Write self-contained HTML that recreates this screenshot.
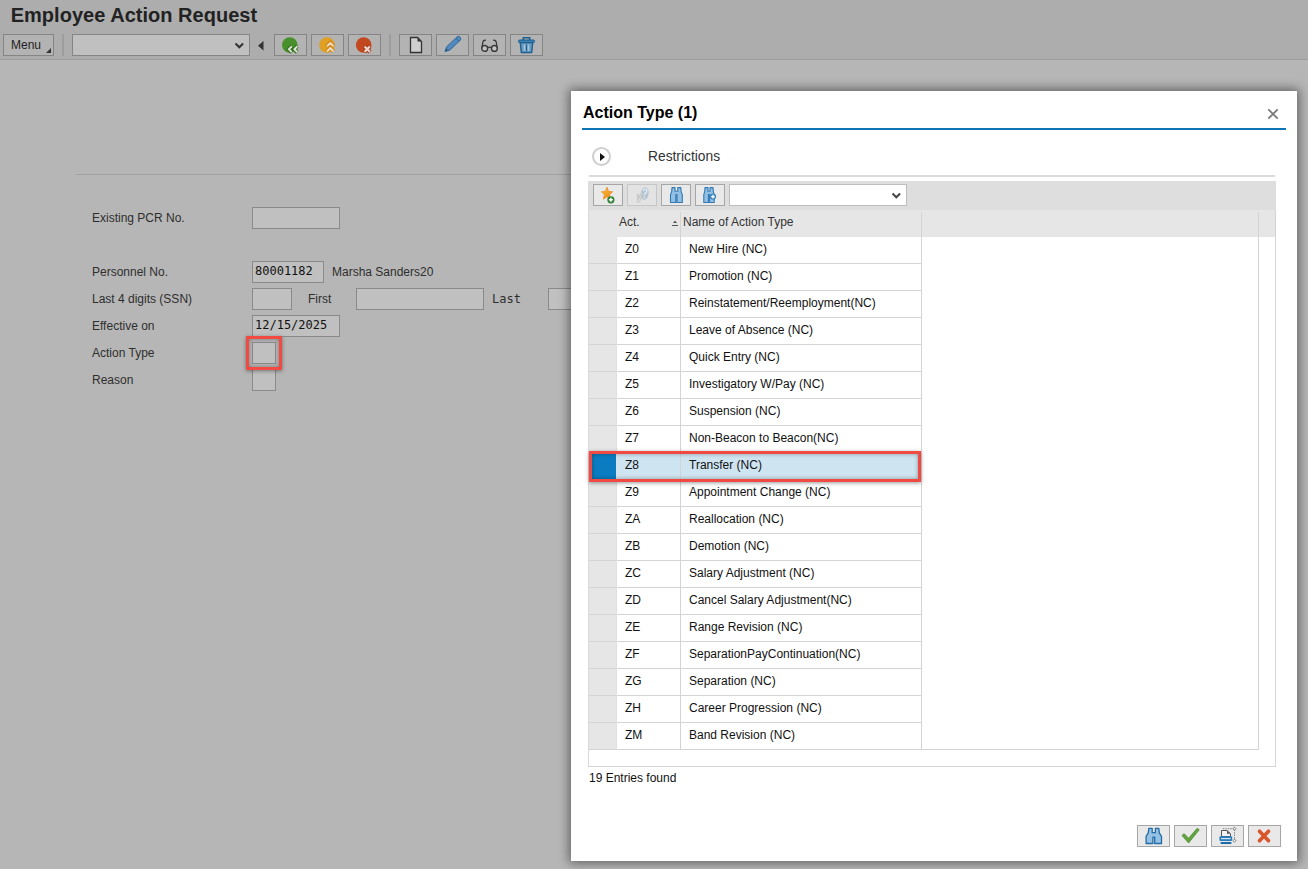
<!DOCTYPE html>
<html lang="en">
<head>
<meta charset="utf-8">
<title>Employee Action Request</title>
<style>
*{box-sizing:border-box;margin:0;padding:0}
html,body{width:1308px;height:869px;overflow:hidden}
body{background:#b6b6b6;font-family:"Liberation Sans",Arial,sans-serif;font-size:12px;color:#2b2b2b;position:relative}
.abs{position:absolute}
#titlebar{position:absolute;left:0;top:0;width:1308px;height:59px;background:#adadad}
#title{position:absolute;left:10.7px;top:2.6px;font-size:20px;font-weight:bold;color:#222;line-height:25px;white-space:nowrap;letter-spacing:0.02px}
#tbline{position:absolute;left:0;top:59px;width:1308px;height:1px;background:#9c9c9c}
.tbtn{position:absolute;top:34px;height:22px;width:33px;border:1px solid #858585;background:#b3b3b3}
.tbtn svg{position:absolute;left:0;top:0}
#menu{position:absolute;left:3px;top:34px;width:51px;height:22px;border:1px solid #858585;background:#b3b3b3;font-size:12px;color:#222;line-height:20px;padding-left:7px}
#menu:after{content:"";position:absolute;right:2.300px;bottom:1.700px;border-left:5px solid transparent;border-bottom:5px solid #333}
.vsep{position:absolute;top:34px;width:1px;height:22px;background:#999}
#cmd{position:absolute;left:72px;top:34px;width:178px;height:22px;border:1px solid #858585;background:#c0c0c0}
.lbl{position:absolute;font-size:12px;color:#2e2e2e;line-height:14px;white-space:nowrap}
.inp{position:absolute;height:22px;border:1px solid #8a8a8a;background:#c0c0c0;font-family:"DejaVu Sans Mono","Liberation Mono",monospace;font-size:12px;color:#111;line-height:19px;padding-left:2px;white-space:nowrap;overflow:hidden}
.mono{font-family:"DejaVu Sans Mono","Liberation Mono",monospace;font-size:12px}
#hr1{position:absolute;left:76px;top:174px;width:600px;height:1px;background:#a0a0a0}
.redbox{position:absolute;border:3px solid #f04a43;box-shadow:0 1px 4px rgba(0,0,0,.4), inset 0 0 4px rgba(0,0,0,.35)}
#dlg{position:absolute;left:571px;top:91px;width:726px;height:770px;background:#fff;box-shadow:0 0 10px 2px rgba(0,0,0,.47)}
#dtitle{position:absolute;left:583px;top:103px;font-size:16px;font-weight:bold;color:#000;line-height:20px;white-space:nowrap}
#dline{position:absolute;left:582px;top:128px;width:704px;height:2px;background:#0f74b3}
#exp{position:absolute;left:592px;top:147px;width:19px;height:19px;border:2px solid #cfcfcf;border-radius:50%}
#exp:after{content:"";position:absolute;left:6px;top:3.500px;border-left:5px solid #111;border-top:4.5px solid transparent;border-bottom:4.5px solid transparent}
#restr{position:absolute;left:648px;top:149px;font-size:13.8px;color:#333;line-height:16px}
#hr2{position:absolute;left:589px;top:175px;width:686px;height:2px;background:#dcdcdc}
#gtool{position:absolute;left:588px;top:181px;width:688px;height:29px;background:#dedede}
#ghead{position:absolute;left:588px;top:210px;width:688px;height:27px;background:#e6e6e6}
.gbtn{position:absolute;top:184px;width:30px;height:22px;border:1px solid #a6a6a6;background:#e9e9e9}
.gbtn svg{position:absolute;left:0;top:0}
#gsel{position:absolute;left:729px;top:184px;width:178px;height:22px;border:1px solid #bdbdbd;background:#fff}
.hd{position:absolute;top:215px;font-size:12px;color:#333;line-height:14px;white-space:nowrap}
.row{position:absolute;left:588px;width:334px;height:27px;border-bottom:1px solid #d4d4d4}
.row .rs{position:absolute;left:0;top:0;width:28px;height:26px;background:#e6e6e6}
.row .c1{position:absolute;left:37px;top:5px;line-height:14px;color:#111;white-space:nowrap}
.row .c2{position:absolute;left:101px;top:5px;line-height:14px;color:#111;white-space:nowrap}
.row.sel{background:#cfe4f1}
.row.sel .rs{background:#0b7cc1}
.vline{position:absolute;width:1px;background:#d4d4d4}
.hline{position:absolute;height:1px;background:#d4d4d4}
.fbtn{position:absolute;top:825px;width:33px;height:22px;border:1px solid #a6a6a6;background:#e9e9e9}
.fbtn svg{position:absolute;left:0;top:0}
</style>
</head>
<body>
<div id="titlebar"></div>
<div id="title">Employee Action Request</div>
<div id="tbline"></div>
<div id="menu">Menu</div>
<div class="vsep" style="left:62px;width:2px;background:#9d9d9d"></div>
<div id="cmd"><svg width="176" height="20" style="position:absolute;left:0;top:0"><path d="M162.5 8.5l3.8 3.8 3.8-3.8" fill="none" stroke="#333" stroke-width="2"/></svg></div>
<svg class="abs" style="left:257px;top:40px" width="8" height="12"><path d="M6.5 1v9.5L1 5.7z" fill="#333"/></svg>

<div class="tbtn" style="left:274px"><svg width="31" height="20" viewBox="0 0 31 20"><circle cx="14.800" cy="10" r="7.800" fill="#47902b"/><path d="M16.800 11.200l-3.100 3.100 3.100 3.100M22.300 11.200l-3.100 3.100 3.100 3.100" fill="none" stroke="#356f22" stroke-width="3.800"/><path d="M16.800 11.400l-2.900 2.900 2.900 2.900M22.300 11.400l-2.900 2.900 2.900 2.900" fill="none" stroke="#dfe8d6" stroke-width="1.900"/></svg></div>
<div class="tbtn" style="left:311px"><svg width="31" height="20" viewBox="0 0 31 20"><circle cx="15" cy="10" r="7.800" fill="#dfa023"/><path d="M14.900 11.200l3.400-3.400 3.400 3.400M14.900 16.400l3.400-3.400 3.400 3.400" fill="none" stroke="#cf861c" stroke-width="3.800"/><path d="M15.100 11.200l3.200-3.200 3.200 3.200M15.100 16.400l3.200-3.200 3.200 3.200" fill="none" stroke="#f1e3c8" stroke-width="1.900"/></svg></div>
<div class="tbtn" style="left:348px"><svg width="31" height="20" viewBox="0 0 31 20"><circle cx="14.700" cy="10" r="7.800" fill="#c2481f"/><path d="M15.400 11.300l5.600 5.600M21 11.300l-5.600 5.600" fill="none" stroke="#a93a1a" stroke-width="4.200"/><path d="M15.600 11.500l5.200 5.200M20.800 11.500l-5.200 5.200" fill="none" stroke="#e9d8cf" stroke-width="2.200"/></svg></div>
<div class="vsep" style="left:389px;width:2px;background:#9d9d9d"></div>
<div class="tbtn" style="left:399px"><svg width="31" height="20" viewBox="0 0 31 20"><path d="M10.500 2.500h7l4 4v11h-11z" fill="#cfcfcf" stroke="#333" stroke-width="1.300"/><path d="M17.500 2.500v4h4z" fill="#333"/></svg></div>
<div class="tbtn" style="left:436px"><svg width="31" height="20" viewBox="0 0 31 20"><path d="M8 16.500L9.700 11.700L20.600 1.400Q23.600 1 23.800 4.700L12.850 15.070Z" fill="#5289bf" stroke="#2f6799" stroke-width="1" stroke-linejoin="round"/><path d="M8 16.500l1.100-3.200 2.300 2.300z" fill="#2b5a85"/><path d="M19 3l3.200 3.300" stroke="#2f6799" stroke-width=".9"/></svg></div>
<div class="tbtn" style="left:473px"><svg width="31" height="20" viewBox="0 0 31 20"><circle cx="10.700" cy="13.400" r="2.900" fill="#c4c4c4" stroke="#3a3a3a" stroke-width="1.400"/><circle cx="20.400" cy="13.400" r="2.900" fill="#c4c4c4" stroke="#3a3a3a" stroke-width="1.400"/><path d="M13.500 12.800q2-1.300 4.100 0M8 12.500l.9-5.700q.4-1.900 3-1.500M23.100 12.500l-.9-5.700q-.4-1.900-3-1.500" fill="none" stroke="#3a3a3a" stroke-width="1.300"/></svg></div>
<div class="tbtn" style="left:510px"><svg width="31" height="20" viewBox="0 0 31 20"><path d="M9.300 7.500h12.400l-1 10h-10.400z" fill="#6a9bc0" stroke="#1c5f90" stroke-width="1.400" stroke-linejoin="round"/><path d="M12.300 5v-2.300h6.400v2.300" fill="none" stroke="#1c5f90" stroke-width="1.500"/><rect x="7.500" y="5" width="16" height="2.600" rx="1.200" fill="#3d7fb0" stroke="#1c5f90" stroke-width="1"/><path d="M13.500 9.500v6.500M17.500 9.500v6.500" stroke="#a9c4d8" stroke-width="1.500"/><path d="M15.500 9.500v6.500" stroke="#1c5f90" stroke-width="1"/></svg></div>

<div id="hr1"></div>
<div class="lbl" style="left:92px;top:211px">Existing PCR No.</div>
<div class="inp" style="left:252px;top:207px;width:88px"></div>
<div class="lbl" style="left:92px;top:265px">Personnel No.</div>
<div class="inp" style="left:252px;top:261px;width:72px">80001182</div>
<div class="lbl" style="left:332px;top:265px">Marsha Sanders20</div>
<div class="lbl" style="left:92px;top:292px">Last 4 digits (SSN)</div>
<div class="inp" style="left:252px;top:288px;width:40px"></div>
<div class="lbl" style="left:308px;top:292px">First</div>
<div class="inp" style="left:356px;top:288px;width:128px"></div>
<div class="lbl mono" style="left:492px;top:292px">Last</div>
<div class="inp" style="left:548px;top:288px;width:60px"></div>
<div class="lbl" style="left:92px;top:319px">Effective on</div>
<div class="inp" style="left:252px;top:315px;width:88px">12/15/2025</div>
<div class="lbl" style="left:92px;top:346px">Action Type</div>
<div class="inp" style="left:252px;top:342px;width:24px"></div>
<div class="lbl" style="left:92px;top:373px">Reason</div>
<div class="inp" style="left:252px;top:369px;width:24px"></div>
<div class="redbox" style="left:246px;top:336px;width:36px;height:34px"></div>

<div id="dlg"></div>
<div id="dtitle">Action Type (1)</div>
<svg class="abs" style="left:1266px;top:107px" width="14" height="14"><path d="M2.300 2.300l9.400 9.400M11.700 2.300l-9.400 9.400" stroke="#7a7a7a" stroke-width="1.800" fill="none"/></svg>
<div id="dline"></div>
<div id="exp"></div>
<div id="restr">Restrictions</div>
<div id="hr2"></div>
<div id="gtool"></div>
<div id="ghead"></div>
<div class="gbtn" style="left:593px"><svg width="28" height="20" viewBox="0 0 28 20"><defs><linearGradient id="sg" x1="0" y1="0" x2="1" y2="1"><stop offset="0" stop-color="#fbc830"/><stop offset="1" stop-color="#ea7d20"/></linearGradient></defs><path d="M13 2.200l1.600 4.300 4 .3-3 2.800 1 4.600-3.600-2.500-3.600 2.500 1-4.600-3-2.800 4-.3z" fill="url(#sg)" stroke="#ec8c1e" stroke-width=".8" stroke-linejoin="round"/><circle cx="16.900" cy="14.800" r="3.600" fill="#2f8038"/><path d="M16.900 12.800v4M14.900 14.800h4" stroke="#fff" stroke-width="1.500"/></svg></div>
<div class="gbtn" style="left:627px;border-color:#c6c6c6;background:#e3e3e3"><svg width="28" height="20" viewBox="0 0 28 20"><ellipse cx="16.700" cy="8.600" rx="3.900" ry="6.300" fill="#b7c5d3" transform="rotate(8 16.700 8.600)"/><path d="M15.300 6.200q.3-2 2-1.900 1.700.2 1.400 2-.2 1-1.300 2-.7.800-.8 2.200" fill="none" stroke="#dcebf5" stroke-width="1.400"/><circle cx="16.400" cy="12.600" r=".8" fill="#dcebf5"/><path d="M9.500 17.500v-7.500q.2-1 1.200-.8l.1 5 2-5.500q.6-1 1.400-.3l-1.500 5.600q-.5 2-1.700 3.600" fill="#e0e0e0" stroke="#c6c6c6" stroke-width="1"/></svg></div>
<div class="gbtn" style="left:661px"><svg width="28" height="20" viewBox="0 0 28 20"><path d="M10 2.600h3v3.600h2.800v-3.600h3l.3 4 1.200 3v7.900h-5.300v-8h-1.200v8h-5.300v-7.900l1.200-3z" fill="#92bfe2" stroke="#3279b3" stroke-width="1.100" stroke-linejoin="round"/></svg></div>
<div class="gbtn" style="left:695px"><svg width="28" height="20" viewBox="0 0 28 20"><path d="M9 2.600h3v3.600h2v-3.600h3l.3 4 .9 3v7.900h-4.600v-8h-1.200v8h-4.600v-7.900l.9-3z" fill="#92bfe2" stroke="#3279b3" stroke-width="1.100" stroke-linejoin="round"/><circle cx="17" cy="11.600" r="3.100" fill="#3a85c0"/><path d="M17 9.700v3.800M15.100 11.600h3.800" stroke="#fff" stroke-width="1.400"/></svg></div>
<div id="gsel"><svg width="176" height="20" style="position:absolute;left:0;top:0"><path d="M162.500 8.500l3.800 3.800 3.800-3.800" fill="none" stroke="#444" stroke-width="2"/></svg></div>
<div class="hd" style="left:619px">Act.</div>
<svg class="abs" style="left:671px;top:219px" width="8" height="8"><path d="M4 1.500l2 2.500h-4z" fill="#555"/><path d="M1 6.500h6" stroke="#555" stroke-width="1"/></svg>
<div class="hd" style="left:683px">Name of Action Type</div>
<div class="row" style="top:237px"><span class="rs"></span><span class="c1">Z0</span><span class="c2">New Hire (NC)</span></div>
<div class="row" style="top:264px"><span class="rs"></span><span class="c1">Z1</span><span class="c2">Promotion (NC)</span></div>
<div class="row" style="top:291px"><span class="rs"></span><span class="c1">Z2</span><span class="c2">Reinstatement/Reemployment(NC)</span></div>
<div class="row" style="top:318px"><span class="rs"></span><span class="c1">Z3</span><span class="c2">Leave of Absence (NC)</span></div>
<div class="row" style="top:345px"><span class="rs"></span><span class="c1">Z4</span><span class="c2">Quick Entry (NC)</span></div>
<div class="row" style="top:372px"><span class="rs"></span><span class="c1">Z5</span><span class="c2">Investigatory W/Pay (NC)</span></div>
<div class="row" style="top:399px"><span class="rs"></span><span class="c1">Z6</span><span class="c2">Suspension (NC)</span></div>
<div class="row" style="top:426px"><span class="rs"></span><span class="c1">Z7</span><span class="c2">Non-Beacon to Beacon(NC)</span></div>
<div class="row sel" style="top:453px"><span class="rs"></span><span class="c1">Z8</span><span class="c2">Transfer (NC)</span></div>
<div class="row" style="top:480px"><span class="rs"></span><span class="c1">Z9</span><span class="c2">Appointment Change (NC)</span></div>
<div class="row" style="top:507px"><span class="rs"></span><span class="c1">ZA</span><span class="c2">Reallocation (NC)</span></div>
<div class="row" style="top:534px"><span class="rs"></span><span class="c1">ZB</span><span class="c2">Demotion (NC)</span></div>
<div class="row" style="top:561px"><span class="rs"></span><span class="c1">ZC</span><span class="c2">Salary Adjustment (NC)</span></div>
<div class="row" style="top:588px"><span class="rs"></span><span class="c1">ZD</span><span class="c2">Cancel Salary Adjustment(NC)</span></div>
<div class="row" style="top:615px"><span class="rs"></span><span class="c1">ZE</span><span class="c2">Range Revision (NC)</span></div>
<div class="row" style="top:642px"><span class="rs"></span><span class="c1">ZF</span><span class="c2">SeparationPayContinuation(NC)</span></div>
<div class="row" style="top:669px"><span class="rs"></span><span class="c1">ZG</span><span class="c2">Separation (NC)</span></div>
<div class="row" style="top:696px"><span class="rs"></span><span class="c1">ZH</span><span class="c2">Career Progression (NC)</span></div>
<div class="row" style="top:723px"><span class="rs"></span><span class="c1">ZM</span><span class="c2">Band Revision (NC)</span></div>
<div class="vline" style="left:588px;top:210px;height:557px;background:#dadada"></div>
<div class="vline" style="left:616px;top:237px;height:513px;background:#e0e0e0"></div>
<div class="vline" style="left:680px;top:212px;height:538px"></div>
<div class="vline" style="left:921px;top:212px;height:538px"></div>
<div class="vline" style="left:1258px;top:212px;height:538px"></div>
<div class="vline" style="left:1275px;top:210px;height:557px"></div>
<div class="hline" style="left:921px;top:749px;width:338px"></div>
<div class="hline" style="left:588px;top:766px;width:688px"></div>
<div class="redbox" style="left:589px;top:451px;width:332px;height:31px"></div>
<div class="lbl" style="left:589px;top:771px;color:#111">19 Entries found</div>

<div class="fbtn" style="left:1137px"><svg width="31" height="20" viewBox="0 0 31 20"><path d="M10.800 2.400h3.400v4.300h3.200v-4.300h3.400l.5 4.500 2.200 3.500v7.100h-6.800v-6.300h-1.800v6.300h-6.800v-7.100l2.200-3.500z" fill="#94c1e4" stroke="#246ca6" stroke-width="1.300" stroke-linejoin="round"/></svg></div>
<div class="fbtn" style="left:1174px"><svg width="31" height="20" viewBox="0 0 31 20"><path d="M7 9.500l2.200-1.800 4.400 4.600 8.600-10 2 1.500-10.600 13.200z" fill="#62a540" stroke="#4c8a30" stroke-width=".8" stroke-linejoin="round"/></svg></div>
<div class="fbtn" style="left:1211px"><svg width="31" height="20" viewBox="0 0 31 20"><path d="M10.900 2.700h11.600v12" fill="none" stroke="#666" stroke-width=".8" stroke-dasharray="1.400 1.100"/><path d="M9.500 10.500v-6h5.500l3.500 3.300v2.700z" fill="#f2f2f2" stroke="#555" stroke-width="1"/><path d="M15 4.500v3.300h3.500z" fill="#555"/><rect x="7.400" y="10.300" width="12.800" height="4.700" rx="1.200" fill="#2a7dbb"/><path d="M9 12.600h9.600" stroke="#d4e6f3" stroke-width="1.200"/><rect x="8.600" y="16.100" width="10.800" height="2" rx=".5" fill="#1e6ba5"/><rect x="21.400" y="1.600" width="2.200" height="2.200" fill="#fff" stroke="#555" stroke-width=".7" transform="rotate(45 22.500 2.700)"/><rect x="21.400" y="13.600" width="2.200" height="2.200" fill="#fff" stroke="#555" stroke-width=".7" transform="rotate(45 22.500 14.700)"/></svg></div>
<div class="fbtn" style="left:1248px"><svg width="31" height="20" viewBox="0 0 31 20"><path d="M10.500 5.300l9 9.400M19.500 5.300l-9 9.400" fill="none" stroke="#d9562a" stroke-width="3.700" stroke-linecap="round"/></svg></div>
</body>
</html>
